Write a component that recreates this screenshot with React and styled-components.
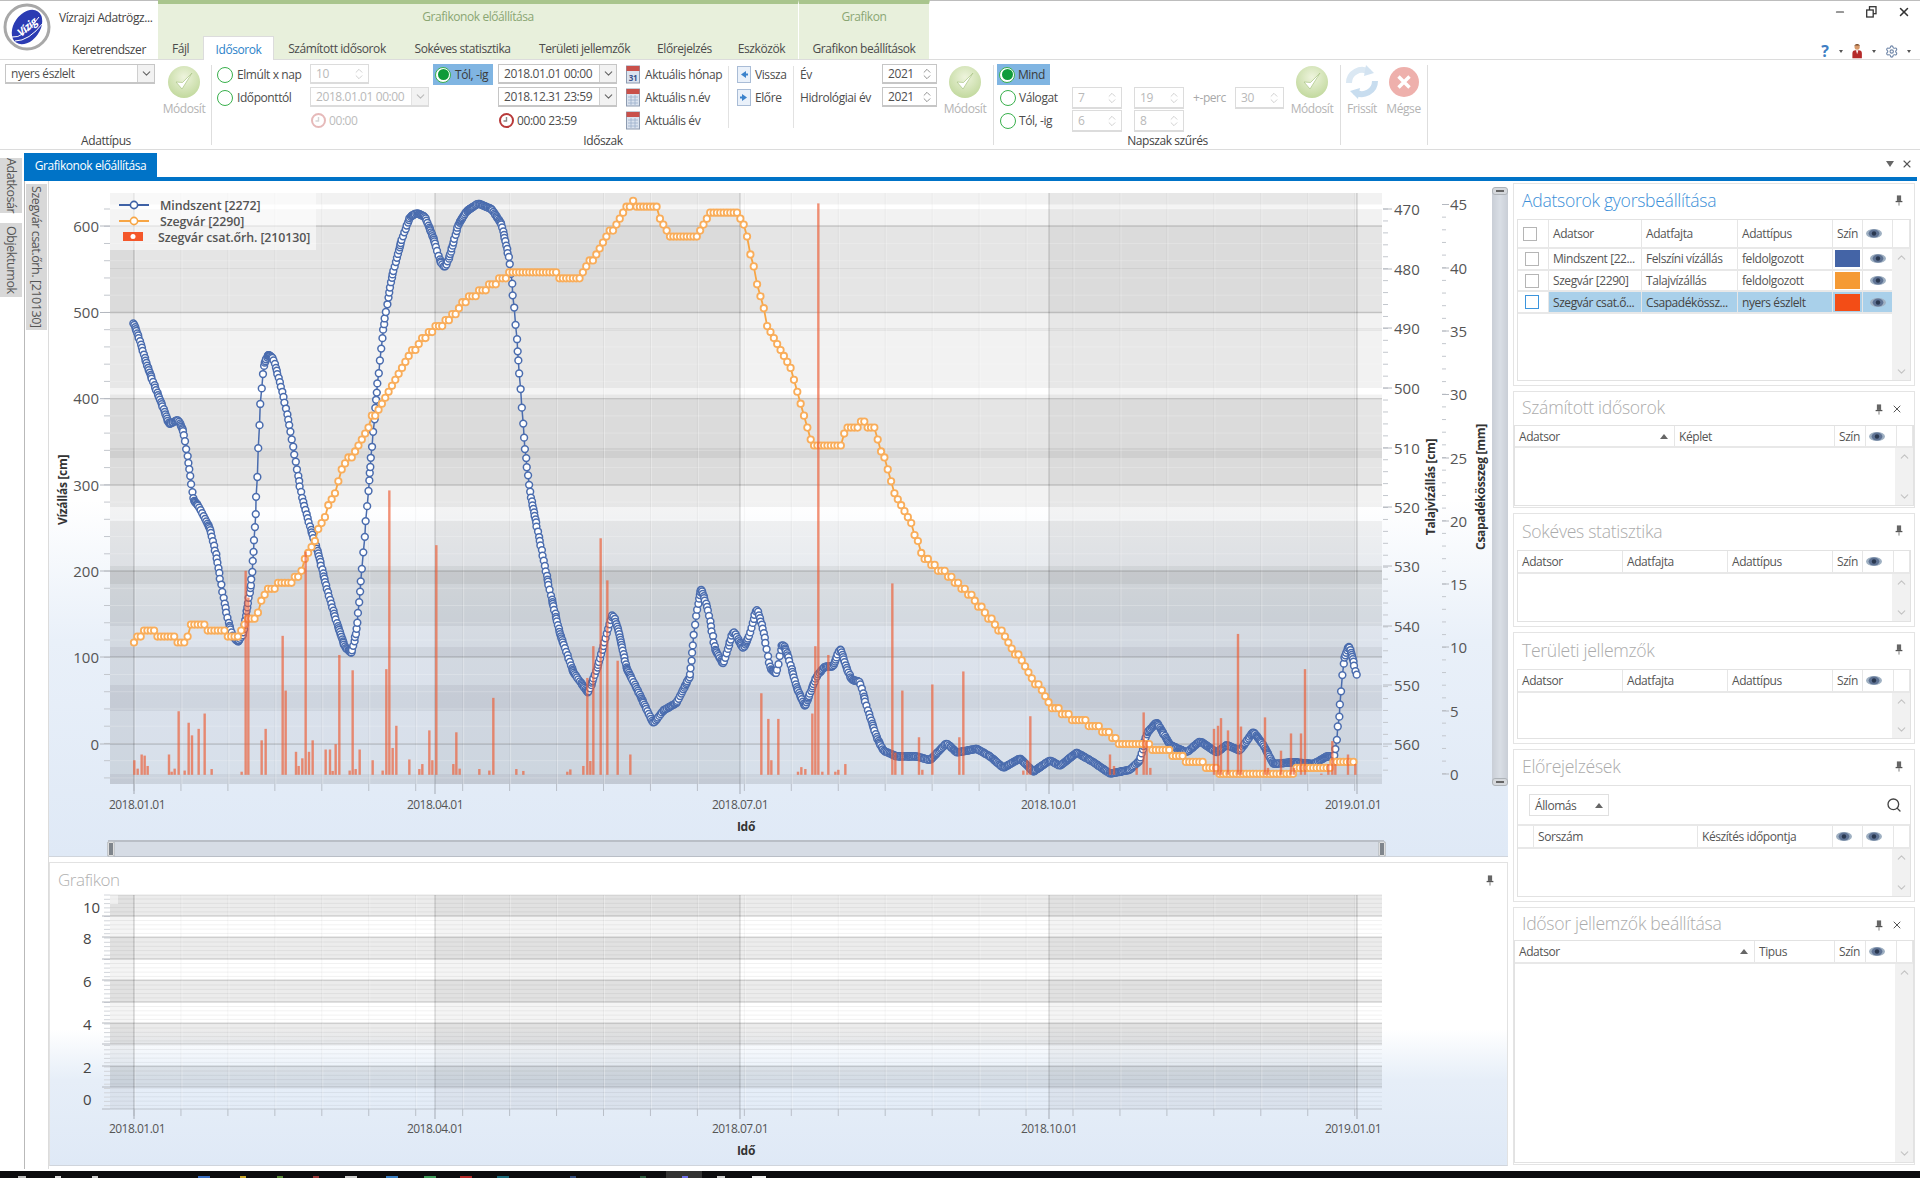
import React from "react";
import styled, { createGlobalStyle } from "styled-components";
import { ChevronUp, ChevronDown, ChevronsUpDown, Search, X, Minus, Settings } from "lucide-react";

const FONT = `"Open Sans", "Noto Sans", sans-serif`;

const Global = createGlobalStyle`
  html, body { margin: 0; padding: 0; width: 1920px; height: 1178px; overflow: hidden; background: #fff; }
  body { font-family: ${FONT}; font-size: 12px; letter-spacing: -0.42px; color: #555; }
  * { box-sizing: border-box; }
  svg text { font-family: ${FONT}; }
`;

const Page = styled.div`
  position: relative; width: 1920px; height: 1178px; display: flex; flex-direction: column; overflow: hidden; background: #fff;
`;

/* ---------- title bar ---------- */
const TitleBar = styled.header`
  height: 60px; flex: none; display: flex; position: relative; border-top: 1px solid #bdbdbd; border-bottom: 1px solid #dcdcdc;
`;
const AppMenu = styled.div`
  width: 158px; flex: none; position: relative;
`;
const LogoBox = styled.div`position: absolute; left: 3px; top: 2px; width: 48px; height: 48px;`;
const AppTitle = styled.div`position: absolute; left: 59px; top: 8px; white-space: nowrap; color: #444;`;
const AppTab = styled.div`position: absolute; left: 72px; top: 40px; white-space: nowrap; color: #444;`;
const ContextGroup = styled.div`
  width: ${p => p.$w}px; flex: none; display: flex; flex-direction: column; background: #e8f0dc;
  border-top: 4px solid #a9c58d; border-right: 1px solid #fff; margin-top: -1px;
`;
const ContextLabel = styled.div`height: 33px; padding-top: 4px; text-align: center; color: #8aa673;`;
const TabRow = styled.div`display: flex; height: 23px;`;
const RibbonTab = styled.div`
  width: ${p => p.$w}px; flex: none; display: flex; align-items: center; justify-content: center; white-space: nowrap; color: #4b4b4b; padding-top: 2px;
  ${p => p.$active ? `background:#fff; color:#2b82c9; border:1px solid #dcdcdc; border-bottom:0; height:24px;` : ""}
`;
const WindowButtons = styled.div`
  position: absolute; right: 9px; top: 4px; display: flex; gap: 20px; align-items: center; color: #333;
`;
const HelpRow = styled.div`
  position: absolute; left: 1820px; top: 39px; width: 100px; display: flex; align-items: center; color: #555;
`;
const Caret = styled.span`
  display: inline-block; margin: 0 9px 0 9px; border-left: 2.5px solid transparent; border-right: 2.5px solid transparent; border-top: 3px solid #555;
`;
const HelpMark = styled.span`color: #3f7fc4; font-weight: 700; font-size: 16px; width: 13px; text-align: center; letter-spacing: 0;`;

/* ---------- ribbon ---------- */
const Ribbon = styled.section`
  height: 90px; flex: none; display: flex; border-bottom: 1px solid #dcdcdc;
`;
const Group = styled.div`
  width: ${p => p.$w}px; flex: none; display: flex; flex-direction: column; position: relative;
  &::after { content: ""; position: absolute; right: 0; top: 5px; bottom: 4px; width: 1px; background: #dedede; }
`;
const GroupBody = styled.div`height: 72px; padding-top: 4px; display: flex;`;
const GroupLabel = styled.div`text-align: center; color: #444; height: 17px; line-height: 17px;`;
const Section = styled.div`
  width: ${p => p.$w}px; flex: none; position: relative; display: flex; padding-left: ${p => p.$pad || 0}px;
  ${p => p.$sep ? `&::after { content:""; position:absolute; right:0; top:2px; height:62px; width:1px; background:#e2e2e2; }` : ""}
`;
const Cells = styled.div`
  display: grid; grid-template-columns: ${p => p.$cols}; grid-auto-rows: 23px; align-items: start; justify-items: start;
`;
const Combo = styled.div`
  width: ${p => p.$w}px; height: ${p => p.$h || 20}px; display: flex; align-items: center; justify-content: space-between; background: #fff;
  border: 1px solid ${p => p.$off ? "#dcdcdc" : "#c6c6c6"}; border-bottom-width: 2px; padding-left: 5px; white-space: nowrap;
  color: ${p => p.$off ? "#b9b9b9" : "#4f4f4f"};
`;
const ComboButton = styled.span`
  width: 17px; align-self: stretch; flex: none; display: flex; align-items: center; justify-content: center;
  border-left: 1px solid ${p => p.$off ? "#e3e3e3" : "#cfcfcf"}; background: #f2f2f2; color: ${p => p.$off ? "#bbb" : "#666"};
`;
const SpinButton = styled.span`
  width: 14px; flex: none; display: flex; align-items: center; justify-content: center; margin-right: 2px; color: ${p => p.$off ? "#bdbdbd" : "#666"};
`;
const RadioItem = styled.div`
  display: flex; align-items: center; gap: ${p => p.$gap ?? 4}px; height: 21px; padding-left: ${p => p.$pad ?? 4}px; padding-right: 5px; white-space: nowrap; color: #4c4c4c;
  ${p => p.$on ? "background:#80b5e2; color:#3b3b3b;" : ""}
`;
const RadioDot = styled.span`
  width: 16px; height: 16px; flex: none; border-radius: 50%; border: 1.5px solid #39b04c; background: #fff; position: relative;
  ${p => p.$on ? `&::after { content:""; position:absolute; inset:1.5px; border-radius:50%; background:#0f9b3a; }` : ""}
`;
const ActionItem = styled.div`
  display: flex; align-items: center; gap: ${p => p.$gap ?? 4}px; height: 21px; white-space: nowrap; color: ${p => p.$off ? "#bcbcbc" : "#4c4c4c"}; padding-left: ${p => p.$pad ?? 0}px;
`;
const PlainLabel = styled.div`height: 21px; line-height: 21px; white-space: nowrap; color: ${p => p.$soft ? "#a8a8a8" : "#4c4c4c"};`;
const BigButton = styled.div`
  width: ${p => p.$w}px; flex: none; margin-left: ${p => p.$ml || 0}px; display: flex; flex-direction: column; align-items: center; color: #b4b4b4; white-space: nowrap;
`;
const BigIconBox = styled.div`height: 36px; display: flex; align-items: center; justify-content: center;`;

/* ---------- dock strip ---------- */
const DockStrip = styled.div`
  height: 31px; flex: none; margin-left: 24px; position: relative; padding-top: 3px;
`;
const DockTab = styled.div`
  width: 133px; height: 24px; background: #0073c7; color: #fff; display: flex; align-items: center; justify-content: center; white-space: nowrap;
`;
const DockLine = styled.div`height: 4px; background: #0073c7; margin-right: 3px;`;
const DockButtons = styled.div`position: absolute; right: 7px; top: 8px; display: flex; gap: 7px; align-items: center; color: #555;`;
const DownMark = styled.span`border-left: 4px solid transparent; border-right: 4px solid transparent; border-top: 6px solid #666;`;

/* ---------- workspace ---------- */
const Workspace = styled.main`flex: 1; display: flex; min-height: 0; position: relative;`;
const Rail = styled.div`width: 24px; flex: none; padding-top: 0; display: flex; flex-direction: column; align-items: flex-start;`;
const RailTab = styled.div`
  writing-mode: vertical-rl; background: #d8d8d8; color: #555; width: ${p => p.$w || 22}px; height: ${p => p.$h}px; margin-top: ${p => p.$mt || 0}px;
  display: flex; align-items: center; justify-content: center; white-space: nowrap; font-size: 12.5px; letter-spacing: -0.42px;
`;
const SecondRail = styled.div`
  width: 25px; flex: none; padding: 3px 0 0 1px; border-left: 1px solid #b9b9b9; border-right: 1px solid #dcdcdc; height: 988px;
`;
const ChartColumn = styled.div`width: 1459px; flex: none; padding-top: 3px; display: flex; flex-direction: column; gap: 5px; margin-left: 0;`;
const ChartPanel = styled.section`
  position: relative; height: 673px; border-bottom: 1px solid #d0d5dc;
  background: linear-gradient(#fff 0%, #fff 47%, #e9f0f9 68%, #dfe9f6 100%);
`;
const SecondPanel = styled.section`
  position: relative; height: 304px; border: 1px solid #e2e2e2; border-bottom: 1px solid #d0d5dc; margin-top: 0;
  background: linear-gradient(#fff 0%, #fff 55%, #e6eef8 72%, #dfe9f6 100%);
`;
const PlotSvg = styled.svg`position: absolute; left: 0; top: 0; display: block;`;
const PanelTitleSmall = styled.div`position: absolute; left: 8px; top: 5px; font-size: 17px; color: #b0b0b0; font-weight: 300;`;
const PinSpot = styled.div`position: absolute; right: 13px; top: 10px;`;
const HScroll = styled.div`
  position: absolute; left: 59px; top: 656px; width: 1276px; height: 17px; background: #d6dce5; border-top: 2px solid #b9bec6; border-bottom: 1px solid #b9bec6;
`;
const HHandle = styled.span`
  position: absolute; top: -1px; ${p => p.$right ? "right:-2px" : "left:-1px"}; width: 8px; height: 16px; border-radius: 2px; background: #7f858c; border: 1px solid #c2c7cc; box-shadow: inset 0 0 0 1px #dedede;
`;
const VScroll = styled.div`
  position: absolute; left: 1443px; top: 5px; width: 16px; height: 595px; background: linear-gradient(90deg,#c9ced6,#d9dee5,#c9ced6); border-radius: 2px;
`;
const VHandle = styled.span`
  position: absolute; left: 0; ${p => p.$bottom ? "bottom:-2px" : "top:-2px"}; width: 16px; height: 8px; border-radius: 3px; background: #d5d8dc; border: 1px solid #aeb3b8;
  &::after { content:""; position:absolute; left:3px; right:3px; top:2px; height:2px; background:#666; }
`;

/* ---------- right panels ---------- */
const SideColumn = styled.aside`
  width: 402px; flex: none; margin-left: 5px; padding-top: 2px; display: flex; flex-direction: column; gap: 5px;
`;
const SidePanel = styled.section`
  height: ${p => p.$h}px; flex: none; border: 1px solid #e4e4e4; background: #fff; padding: 0 ${p => p.$inset ?? 3}px; position: relative; display: flex; flex-direction: column;
`;
const SideTitle = styled.h3`
  margin: 0; height: ${p => p.$h}px; flex: none; padding: 0 0 3px ${p => 5 + (p.$lead || 0)}px; font-size: 17.6px; font-weight: 300; letter-spacing: -0.3px; display: flex; align-items: center;
  color: ${p => p.$active ? "#3b8fd8" : "#ababab"}; white-space: nowrap;
`;
const TitleIcons = styled.div`position: absolute; right: 11px; top: ${p => p.$top || 11}px; display: flex; gap: 8px; align-items: center; color: #555;`;
const Table = styled.div`
  flex: 1; display: flex; flex-direction: column; border: 1px solid #e2e2e2; margin-bottom: ${p => p.$mb ?? 4}px; min-height: 0;
`;
const Row = styled.div`
  display: grid; grid-template-columns: ${p => p.$cols}; height: ${p => p.$h}px; flex: none; border-bottom: 2px solid #e8e8e8;
`;
const Cell = styled.div`
  display: flex; align-items: center; padding-left: ${p => p.$pad ?? 4}px; border-right: 1px solid #e6e6e6; white-space: nowrap; overflow: hidden; color: #555; min-width: 0;
  ${p => p.$center ? "justify-content:center; padding-left:0;" : ""}
  ${p => p.$spread ? "justify-content:space-between; padding-right:6px;" : ""}
  ${p => p.$sel ? "background:#a9d0ea; color:#444;" : ""}
`;
const TableBody = styled.div`position: relative; flex: 1; min-height: 0;`;
const Track = styled.div`
  position: absolute; right: 0; top: 0; bottom: 0; width: 18px; background: #f1f1f1; display: flex; flex-direction: column; justify-content: space-between; align-items: center; color: #c3c3c3; padding: 2px 0;
`;
const Check = styled.span`
  width: 14px; height: 14px; display: block; background: #fff; border: 1px solid ${p => p.$on ? "#3c95dd" : "#b5b5b5"};
`;
const Swatch = styled.span`display: block; width: 25px; height: 17px; background: ${p => p.$c};`;
const SortMark = styled.span`border-left: 4px solid transparent; border-right: 4px solid transparent; border-bottom: 5px solid #666; flex: none;`;
const FilterRow = styled.div`height: 40px; flex: none; display: flex; align-items: center; justify-content: space-between; padding: 0 8px 0 11px; border-bottom: 2px solid #e8e8e8;`;
const FilterChip = styled.div`width: 80px; height: 22px; border: 1px solid #e0e0e0; display: flex; align-items: center; justify-content: space-between; padding: 0 5px;`;

/* ---------- taskbar ---------- */
const Taskbar = styled.footer`height: 7px; flex: none; background: #0c0c0e; position: relative; border-top: 0;`;
const TaskIcon = styled.span`
  position: absolute; bottom: 0; left: ${p => p.$x}px; width: ${p => p.$w || 12}px; height: ${p => p.$h || 2}px; background: ${p => p.$c};
`;
const TaskActive = styled.span`position: absolute; left: 666px; width: 36px; top: 0; bottom: 0; background: #333;`;

/* ---------- icons ---------- */
const Logo = () => (
  <svg width="48" height="48" viewBox="0 0 48 48">
    <circle cx="24" cy="24" r="22" fill="#fff" stroke="#a8a8a8" strokeWidth="3" />
    <ellipse cx="24" cy="24" rx="13" ry="19" transform="rotate(35 24 24)" fill="#2b3bb3" />
    <path d="M9 34 Q20 36 36 14 M12 38 Q26 38 40 20" stroke="#fff" strokeWidth="1" fill="none" />
    <text x="24" y="28" fontSize="11" fontStyle="italic" fontWeight="700" fill="#fff" textAnchor="middle" transform="rotate(-40 24 24)">Vízig</text>
  </svg>
);
const EyeIcon = () => (
  <svg width="16" height="11" viewBox="0 0 16 11" style={{ flex: "none" }}>
    <ellipse cx="8" cy="5.5" rx="8" ry="4.6" fill="#9fb0c2" />
    <ellipse cx="8" cy="5.5" rx="5.4" ry="4" fill="#5f7394" />
    <circle cx="8" cy="5.5" r="2.2" fill="#2a3850" />
  </svg>
);
const PinIcon = () => (
  <svg width="8" height="11" viewBox="0 0 9 13">
    <rect x="2" y="0.5" width="5" height="6.5" fill="#666" />
    <rect x="0.5" y="7" width="8" height="1.5" fill="#555" />
    <rect x="4" y="8.5" width="1" height="4" fill="#666" />
  </svg>
);
const CalendarIcon = ({ label }) => (
  <svg width="14" height="19" viewBox="0 0 14 19">
    <rect x="0.5" y="1" width="13" height="17" fill="#dbe3ef" stroke="#8d9bb0" />
    <rect x="0.5" y="1" width="13" height="5" fill="#c9504a" />
    {label ? <text x="7" y="16" fontSize="8" fontWeight="700" textAnchor="middle" fill="#39518a">{label}</text> :
      <path d="M2 9h10M2 12h10M2 15h10M5 7v10M9 7v10" stroke="#9db0cc" strokeWidth="0.8" />}
  </svg>
);
const NavIcon = ({ dir }) => (
  <svg width="14" height="17" viewBox="0 0 14 17">
    <rect x="0.5" y="0.5" width="13" height="16" fill="#eaf1fa" stroke="#a9bcd6" />
    <path d={dir === "l" ? "M9 5v7L4 8.5z" : "M5 5v7l5-3.5z"} fill="#3c83cc" />
    <rect x={dir === "l" ? 8.5 : 3} y="7.5" width="2.5" height="2" fill="#3c83cc" />
  </svg>
);
const ClockIcon = ({ off }) => (
  <svg width="15" height="15" viewBox="0 0 15 15" opacity={off ? 0.35 : 1}>
    <circle cx="7.5" cy="7.5" r="6.5" fill="#fff" stroke="#b83a3a" strokeWidth="2" />
    <path d="M7.5 4v4H4.5" stroke="#8a8a8a" strokeWidth="1.4" fill="none" />
  </svg>
);
const RoundOk = () => (
  <svg width="34" height="36" viewBox="0 0 34 36">
    <defs><radialGradient id="okg" cx="50%" cy="35%" r="65%"><stop offset="0" stopColor="#eef4dd" /><stop offset="1" stopColor="#c2d99e" /></radialGradient></defs>
    <circle cx="17" cy="18" r="16" fill="url(#okg)" />
    <path d="M9 18l6 7L25 9l-9.5 9.5z" fill="#fff" stroke="#a9c484" strokeWidth="0.7" />
  </svg>
);
const RoundCancel = () => (
  <svg width="34" height="36" viewBox="0 0 34 36">
    <circle cx="17" cy="18" r="15" fill="#eeb0ac" />
    <path d="M11.5 12.5l11 11M22.5 12.5l-11 11" stroke="#fff" strokeWidth="3.4" />
  </svg>
);
const RefreshIcon = () => (
  <svg width="36" height="36" viewBox="0 0 36 36" fill="none">
    <path d="M5 19a13 13 0 0 1 20-11" stroke="#dbe8f3" strokeWidth="6" />
    <path d="M31 17a13 13 0 0 1-20 11" stroke="#c8ddef" strokeWidth="6" />
    <path d="M22 1l8 8-10 3z" fill="#d3e3f1" />
    <path d="M14 35l-8-8 10-3z" fill="#c8ddef" />
  </svg>
);
const PersonIcon = () => (
  <svg width="13" height="19" viewBox="0 0 13 19">
    <circle cx="6.5" cy="4" r="3.2" fill="#d99a6b" />
    <path d="M3 3.5a3.5 3.5 0 0 1 7 0l-1-1.5H4z" fill="#7a4b2a" />
    <path d="M0.5 18v-6a4 4 0 0 1 4-4h4a4 4 0 0 1 4 4v6z" fill="#b52a2a" />
    <path d="M5 8h3l-1.5 5z" fill="#fff" />
  </svg>
);
const RestoreIcon = () => (
  <svg width="11" height="12" viewBox="0 0 11 12" fill="none" stroke="#333" strokeWidth="1.3">
    <rect x="3.5" y="0.7" width="6.5" height="7" /><rect x="0.7" y="4" width="6.5" height="7" fill="#fff" />
  </svg>
);

/* ---------- chart data (page pixels, from traced coordinates) ---------- */
const zp = (base, pts) => pts.map(([x, y]) => [base + x / 3, 190 + y / 2.613]);
const blueRaw = [
  ...zp(100, [[100,345],[120,395],[140,455],[165,515],[190,570],[207,612],[235,600],[250,630],[265,710],[280,810],[295,825],[330,885],[350,960],[365,1040],[385,1130],[400,1170],[415,1180],[430,1160],[440,1100],[455,1020],[465,880],[472,750],[478,600],[490,460],[505,430],[520,440],[545,520],[565,600],[585,700],[605,800],[630,880],[655,950],[680,1040],[710,1130],[735,1195],[755,1210],[770,1150],[785,1000],[800,840],[815,680],[830,530],[850,360],[875,230],[905,130],[930,70],[950,60],[975,70],[1000,125],[1020,185],[1035,205],[1050,170],[1075,90],[1100,55],[1135,35],[1175,50],[1205,90],[1230,190],[1245,330],[1260,500],[1275,680],[1290,790]]),
  ...zp(530, [[30,920],[60,1050],[90,1160],[130,1260],[175,1315],[205,1240],[230,1160],[248,1105],[265,1150],[290,1250],[330,1320],[370,1395],[400,1360],[440,1340],[480,1270],[495,1130],[513,1040],[535,1100],[555,1200],[580,1240],[610,1150],[640,1200],[660,1160],[680,1090],[700,1150],[720,1250],[740,1265],[757,1180],[775,1220],[800,1300],[825,1350],[860,1270],[885,1245],[910,1245],[930,1195],[950,1250],[965,1280],[990,1285],[1010,1350],[1040,1430],[1060,1465],[1100,1480],[1160,1480],[1200,1490],[1250,1445],[1280,1470]]),
  ...zp(960, [[50,1460],[90,1480],[130,1510],[180,1485],[220,1520],[270,1490],[300,1505],[350,1470],[400,1495],[450,1525],[510,1515],[540,1490],[560,1420],[590,1390],[630,1450],[680,1470],[720,1440],[770,1470],[800,1450],[840,1465],[880,1415],[910,1450],[940,1500],[1000,1495],[1060,1500],[1100,1480],[1125,1480],[1140,1350],[1150,1230],[1167,1190],[1180,1230],[1192,1283]]),
];
const orangeRaw = [
  ...zp(100, [[100,1183],[125,1165],[140,1150],[160,1150],[170,1167],[225,1167],[235,1183],[260,1183],[270,1135],[315,1135],[325,1152],[375,1152],[385,1167],[420,1167],[440,1120],[470,1120],[490,1060],[530,1030],[570,1030],[600,1000],[630,940],[660,880],[700,800],[725,735],[770,670],[820,590],[850,560],[880,500],[940,420],[1000,360],[1040,345],[1100,285],[1140,268],[1190,238],[1250,208],[1260,222],[1350,222]]),
  ...zp(530, [[80,222],[90,238],[145,238],[190,175],[240,110],[290,50],[310,35],[340,50],[380,50],[415,115],[500,115],[550,52],[610,52],[635,70],[660,160],[690,280],[715,360],[780,460],[840,640],[845,672],[930,672],[950,625],[1000,610],[1035,625],[1090,780],[1140,870],[1180,960],[1210,985],[1240,1000],[1290,1030]]),
  ...zp(960, [[60,1090],[120,1150],[200,1250],[270,1345],[310,1370],[360,1385],[400,1400],[440,1415],[480,1445],[520,1445],[610,1463],[660,1480],[700,1495],[770,1510],[780,1525],[1000,1525],[1010,1510],[1100,1510],[1120,1495],[1185,1495]]),
];
const lerp = (pts, x) => {
  for (let i = 1; i < pts.length; i++) {
    if (x <= pts[i][0]) {
      const [a, b] = [pts[i - 1], pts[i]];
      const t = b[0] === a[0] ? 1 : (x - a[0]) / (b[0] - a[0]);
      return a[1] + (b[1] - a[1]) * t;
    }
  }
  return pts[pts.length - 1][1];
};
/* uneven sampling, as the measured series has: a repeatable pseudo-random step */
const bluePts = (() => {
  const out = [];
  const end = blueRaw[blueRaw.length - 1][0];
  let seed = 7;
  for (let x = blueRaw[0][0]; x <= end;) {
    out.push([x, lerp(blueRaw, x)]);
    seed = (seed * 9301 + 49297) % 233280;
    x += 0.3 + (seed / 233280) * 1.3;
  }
  return out.map((p, i) => {
    let s = 0, n = 0;
    for (let k = Math.max(0, i - 1); k <= Math.min(out.length - 1, i + 1); k++) { s += out[k][1]; n++; }
    return [p[0], s / n];
  });
})();
const orangePts = (() => {
  const out = [];
  for (let x = 134; x <= 1355; x += 3.35) {
    const y = lerp(orangeRaw, x);
    out.push([x, 744 - Math.round((744 - y) / 5.97) * 5.97]);
  }
  return out;
})();
const BAR_BASE = 774.8;
const bars = [
  ...zp(100, [[103,1490],[113,1512],[125,1475],[134,1478],[143,1505],[207,1475],[215,1520],[224,1512],[236,1362],[254,1517],[266,1392],[276,1425],[296,1408],[314,1368],[335,1513],[425,1520],[437,995],[445,1065],[485,1438],[497,1408],[548,1165],[557,1308],[588,1468],[596,1505],[607,1485],[617,945],[627,1468],[638,1438],[677,1462],[690,1462],[698,1518],[707,1448],[718,1215],[749,1517],[758,1255],[767,1513],[779,1462],[818,1490],[848,1517],[859,1252],[868,785],[878,1458],[889,1400],[928,1488],[958,1513],[967,1500],[988,1412],[997,1490],[1009,928],[1060,1500],[1069,1417],[1079,1512],[1138,1513],[1168,1517],[1180,1327],[1249,1513],[1270,1518]]),
  ...zp(530, [[112,1520],[121,1514],[160,1505],[172,1275],[181,1492],[190,1192],[212,910],[232,1020],[263,1230],[301,1475],[694,1315],[715,1382],[724,1490],[745,1382],[804,1520],[814,1508],[826,1513],[847,1368],[856,1192],[865,35],[877,1520],[895,1215],[916,1520],[925,1515],[946,1500],[1087,1028],[1096,1470],[1117,1308],[1167,1430],[1177,1515],[1207,1292],[1288,1430],[1300,1258]]),
  ...zp(960, [[190,1517],[202,1490],[211,1375],[450,1475],[462,1505],[530,1510],[551,1365],[560,1440],[571,1510],[762,1408],[774,1400],[783,1380],[804,1412],[834,1160],[843,1402],[915,1378],[924,1510],[963,1465],[993,1420],[1002,1510],[1023,1420],[1035,1252],[1084,1525],[1105,1500],[1117,1440],[1126,1500],[1164,1475],[1186,1500]]),
];

const PLOT = { x0: 110, x1: 1382 };
const MAJOR_X = [134, 435, 740, 1049, 1357];
const MINOR_X = Array.from({ length: 27 }, (_, i) => 134 + i * 46.95);
const DATES = [["2018.01.01", 137], ["2018.04.01", 435], ["2018.07.01", 740], ["2018.10.01", 1049], ["2019.01.01", 1353]];
const DARK_X = [[110, 134], [435, 740], [1049, 1357]];

const Bands = ({ y0, y1, list, o = 0.05 }) => list.map(([a, b], i) => {
  const t = Math.max(a, y0), e = Math.min(b, y1);
  return e > t ? <rect key={i} x={PLOT.x0} y={t} width={PLOT.x1 - PLOT.x0} height={e - t} fill="#000" opacity={o} /> : null;
});
const VBands = ({ y0, y1 }) => DARK_X.map(([a, b], i) => <rect key={i} x={a} y={y0} width={b - a} height={y1 - y0} fill="#000" opacity="0.045" />);
const VLines = ({ y0, y1 }) => (
  <>
    {MINOR_X.map((x, i) => (
      <g key={i}>
        <line x1={x} x2={x} y1={y0} y2={y1} stroke="#000" strokeOpacity="0.04" />
        <line x1={x + 1} x2={x + 1} y1={y0} y2={y1} stroke="#fff" strokeOpacity="0.3" />
      </g>
    ))}
    {MAJOR_X.map((x, i) => <line key={i} x1={x} x2={x} y1={y0} y2={y1} stroke="#000" strokeOpacity="0.17" strokeWidth="1.2" />)}
  </>
);
const XAxis = ({ y1, labelY, titleY }) => (
  <>
    {MINOR_X.map((x, i) => <line key={i} x1={x} x2={x} y1={y1} y2={y1 + 7} stroke="#b9bfc8" />)}
    {MAJOR_X.map((x, i) => <line key={i} x1={x} x2={x} y1={y1} y2={y1 + 10} stroke="#a5abb5" />)}
    {DATES.map(([t, x]) => <text key={t} x={x} y={labelY} fontSize="12" letterSpacing="-0.5" fill="#555" textAnchor="middle">{t}</text>)}
    <text x="746" y={titleY} fontSize="12" fontWeight="700" letterSpacing="-0.3" fill="#333" textAnchor="middle">Idő</text>
  </>
);
const Ticks = ({ from, to, step, x1, x2, c = "#c3c7cd" }) => {
  const out = [];
  for (let y = from; y <= to; y += step) out.push(<line key={y} x1={x1} x2={x2} y1={y} y2={y} stroke={c} />);
  return out;
};

const MainChart = () => {
  const y0 = 193, y1 = 784;
  const a1 = [[226, 313], [399, 485], [571, 657], [744, 784]];
  const a2 = [[209, 269], [328, 388], [448, 507], [566, 626], [685, 744]];
  const a3 = [[193, 204.5], [268, 331], [394.5, 458], [521, 584], [647, 711], [774, 784]];
  const leftVals = [[600, 226], [500, 312.5], [400, 398.7], [300, 485], [200, 571], [100, 657], [0, 744]];
  const midVals = [[470, 209], [480, 269], [490, 328], [500, 388], [510, 448], [520, 507], [530, 566], [540, 626], [550, 685], [560, 744]];
  const rightVals = [[45, 204.5], [40, 268], [35, 331], [30, 394.5], [25, 458], [20, 521], [15, 584], [10, 647], [5, 711], [0, 774]];
  const minor = [];
  for (let y = 209; y < y1; y += 17.24) minor.push(y);
  const orangeLine = orangePts.map(p => p.join(",")).join(" ");
  const blueLine = bluePts.map(p => p.join(",")).join(" ");
  return (
    <PlotSvg width="1459" height="673" viewBox="49 184 1459 673">
      <Bands y0={y0} y1={y1} list={a1} />
      <Bands y0={y0} y1={y1} list={a2} />
      <Bands y0={y0} y1={y1} list={a3} />
      <VBands y0={y0} y1={y1} />
      {minor.map((y, i) => <line key={i} x1={PLOT.x0} x2={PLOT.x1} y1={y} y2={y} stroke="#fff" strokeOpacity="0.22" />)}
      <VLines y0={y0} y1={y1} />
      {leftVals.map(([, y]) => <line key={y} x1={PLOT.x0} x2={PLOT.x1} y1={y} y2={y} stroke="#000" strokeOpacity="0.17" strokeWidth="1.3" />)}

      <Ticks from={209} to={784} step={17.24} x1={104} x2={110} />
      {leftVals.map(([v, y]) => (
        <g key={v}>
          <line x1="100" x2="110" y1={y} y2={y} stroke="#b4b8bf" />
          <text x="99" y={y + 5.5} fontSize="15" letterSpacing="0" fill="#555" textAnchor="end">{v}</text>
        </g>
      ))}
      <Ticks from={209} to={780} step={11.94} x1={1383} x2={1388} />
      {midVals.map(([v, y]) => (
        <g key={v}>
          <line x1="1383" x2="1392" y1={y} y2={y} stroke="#b4b8bf" />
          <text x="1394" y={y + 5.5} fontSize="15" letterSpacing="0" fill="#555">{v}</text>
        </g>
      ))}
      <Ticks from={204.5} to={774} step={12.65} x1={1442} x2={1446} />
      {rightVals.map(([v, y]) => (
        <g key={v}>
          <line x1="1442" x2="1449" y1={y} y2={y} stroke="#b4b8bf" />
          <text x="1450" y={y + 5.5} fontSize="15" letterSpacing="0" fill="#555">{v}</text>
        </g>
      ))}
      <text transform="translate(67 490) rotate(-90)" fontSize="12" fontWeight="700" letterSpacing="-0.3" fill="#333" textAnchor="middle">Vízállás [cm]</text>
      <text transform="translate(1435 487) rotate(-90)" fontSize="12" fontWeight="700" letterSpacing="-0.3" fill="#333" textAnchor="middle">Talajvízállás [cm]</text>
      <text transform="translate(1485 487) rotate(-90)" fontSize="12" fontWeight="700" letterSpacing="-0.3" fill="#333" textAnchor="middle">Csapadékösszeg [mm]</text>

      <XAxis y1={y1} labelY={809} titleY={831} />

      <polyline points={blueLine} fill="none" stroke="#4a6cae" strokeWidth="1.5" />
      {bluePts.map((p, i) => <circle key={i} cx={p[0]} cy={p[1]} r="3.4" fill="#fff" stroke="#4a6cae" strokeWidth="1.5" />)}
      <polyline points={orangeLine} fill="none" stroke="#f7a544" strokeWidth="1.8" />
      {orangePts.map((p, i) => <circle key={i} cx={p[0]} cy={p[1]} r="3.2" fill="#fff" stroke="#f9ad5a" strokeWidth="1.8" />)}
      {bars.map(([x, y], i) => <rect key={i} x={x - 1.2} y={y} width="2.4" height={BAR_BASE - y} fill="#ec5f36" opacity="0.68" />)}

      <rect x="110" y="193" width="206" height="57" fill="#fff" opacity="0.55" />
      <line x1="119" x2="149" y1="205" y2="205" stroke="#3f62a6" strokeWidth="2" />
      <circle cx="134" cy="205" r="3.6" fill="#fff" stroke="#3f62a6" strokeWidth="1.6" />
      <text x="160" y="210" fontSize="12.4" fontWeight="600" letterSpacing="-0.1" fill="#555">Mindszent [2272]</text>
      <line x1="119" x2="149" y1="221" y2="221" stroke="#f7a544" strokeWidth="2" />
      <circle cx="134" cy="221" r="3.6" fill="#fff" stroke="#f7a544" strokeWidth="1.6" />
      <text x="160" y="226" fontSize="12.4" fontWeight="600" letterSpacing="-0.1" fill="#555">Szegvár [2290]</text>
      <rect x="123" y="232" width="20" height="9" fill="#f4572a" />
      <circle cx="133" cy="236.5" r="2.5" fill="#fff" />
      <text x="158" y="242" fontSize="12.4" fontWeight="600" letterSpacing="-0.1" fill="#555">Szegvár csat.őrh. [210130]</text>
    </PlotSvg>
  );
};

const SmallChart = () => {
  const y0 = 895, y1 = 1109;
  const dark = [[895, 916], [937, 959], [980, 1002], [1023, 1044], [1066, 1087]];
  const majors = [916, 937, 959, 980, 1002, 1023, 1044, 1066, 1087, 1109];
  const minor = [];
  for (let y = 899; y < y1; y += 4.3) minor.push(y);
  const labels = [["10", 913], ["8", 944], ["6", 987], ["4", 1030], ["2", 1073], ["0", 1105]];
  return (
    <PlotSvg width="1457" height="302" viewBox="50 863 1457 302">
      <Bands y0={y0} y1={y1} list={dark} o={0.075} />
      <VBands y0={y0} y1={y1} />
      {minor.map((y, i) => <line key={i} x1={PLOT.x0} x2={PLOT.x1} y1={y} y2={y} stroke="#000" strokeOpacity="0.055" />)}
      <rect x="110" y="895" width="8" height="9" fill="#fff" opacity="0.5" />
      <VLines y0={y0} y1={y1} />
      {majors.map(y => <line key={y} x1={PLOT.x0} x2={PLOT.x1} y1={y} y2={y} stroke="#000" strokeOpacity="0.17" strokeWidth="1.2" />)}
      <line x1={PLOT.x0} x2={PLOT.x1} y1={y0} y2={y0} stroke="#000" strokeOpacity="0.1" />
      <Ticks from={895} to={1109} step={4.3} x1={104} x2={110} c="#d2d5da" />
      {majors.map(y => <line key={y} x1="102" x2="110" y1={y} y2={y} stroke="#b4b8bf" />)}
      {labels.map(([t, y]) => <text key={t} x="83" y={y} fontSize="15" letterSpacing="0" fill="#444">{t}</text>)}
      <XAxis y1={y1} labelY={1133} titleY={1155} />
    </PlotSvg>
  );
};

/* ---------- tables ---------- */
const TRACK = (
  <Track>
    <ChevronUp size={13} />
    <ChevronDown size={13} />
  </Track>
);
const STD_COLS = "105px 105px 105px 30px 31px 1fr";
const StdHeader = () => (
  <Row $cols={STD_COLS} $h={23}>
    <Cell>Adatsor</Cell><Cell>Adatfajta</Cell><Cell>Adattípus</Cell><Cell>Szín</Cell><Cell $pad={3}><EyeIcon /></Cell><Cell />
  </Row>
);
const QUICK_COLS = "31px 93px 96px 95px 30px 30px 1fr";
const QUICK_ROWS = [
  ["Mindszent [22...", "Felszíni vízállás", "feldolgozott", "#4464a6"],
  ["Szegvár [2290]", "Talajvízállás", "feldolgozott", "#f59a34"],
  ["Szegvár csat.ő...", "Csapadékössz...", "nyers észlelt", "#f34d16", true],
];

const Spin = ({ w, value, off = true, h }) => (
  <Combo $w={w} $h={h} $off={off}>
    {value}
    <SpinButton $off={off}><ChevronsUpDown size={14} strokeWidth={1.2} /></SpinButton>
  </Combo>
);
const DateBox = ({ w, value, off }) => (
  <Combo $w={w} $off={off}>
    {value}
    <ComboButton $off={off}><ChevronDown size={13} /></ComboButton>
  </Combo>
);

export default function App() {
  return (
    <Page>
      <Global />
      <TitleBar>
        <AppMenu>
          <LogoBox><Logo /></LogoBox>
          <AppTitle>Vízrajzi Adatrögz...</AppTitle>
          <AppTab>Keretrendszer</AppTab>
        </AppMenu>
        <ContextGroup $w={641}>
          <ContextLabel>Grafikonok előállítása</ContextLabel>
          <TabRow>
            <RibbonTab $w={45}>Fájl</RibbonTab>
            <RibbonTab $w={71} $active>Idősorok</RibbonTab>
            <RibbonTab $w={126}>Számított idősorok</RibbonTab>
            <RibbonTab $w={125}>Sokéves statisztika</RibbonTab>
            <RibbonTab $w={119}>Területi jellemzők</RibbonTab>
            <RibbonTab $w={81}>Előrejelzés</RibbonTab>
            <RibbonTab $w={73}>Eszközök</RibbonTab>
          </TabRow>
        </ContextGroup>
        <ContextGroup $w={131}>
          <ContextLabel>Grafikon</ContextLabel>
          <TabRow><RibbonTab $w={130}>Grafikon beállítások</RibbonTab></TabRow>
        </ContextGroup>
        <WindowButtons>
          <Minus size={12} strokeWidth={2.4} />
          <RestoreIcon />
          <X size={14} strokeWidth={2.6} />
        </WindowButtons>
        <HelpRow>
          <HelpMark>?</HelpMark><Caret />
          <PersonIcon /><Caret />
          <Settings size={17} color="#6f86a8" /><Caret />
        </HelpRow>
      </TitleBar>

      <Ribbon>
        <Group $w={212}>
          <GroupBody>
            <Section $w={162} $pad={5}>
              <DateBox w={150} value="nyers észlelt" />
            </Section>
            <BigButton $w={44}><BigIconBox><RoundOk /></BigIconBox>Módosít</BigButton>
          </GroupBody>
          <GroupLabel>Adattípus</GroupLabel>
        </Group>

        <Group $w={782}>
          <GroupBody>
            <Section $w={517} $sep $pad={1}>
              <Cells $cols="97px 123px 65px 128px 103px">
                <RadioItem><RadioDot />Elmúlt x nap</RadioItem>
                <Spin w={59} value="10" />
                <RadioItem $on $pad={2}><RadioDot $on />Tól, -ig</RadioItem>
                <DateBox w={119} value="2018.01.01 00:00" />
                <ActionItem $gap={5}><CalendarIcon label="31" />Aktuális hónap</ActionItem>

                <RadioItem><RadioDot />Időponttól</RadioItem>
                <DateBox w={119} value="2018.01.01 00:00" off />
                <span />
                <DateBox w={119} value="2018.12.31 23:59" />
                <ActionItem $gap={5}><CalendarIcon />Aktuális n.év</ActionItem>

                <span />
                <ActionItem $off $pad={1} $gap={3}><ClockIcon off />00:00</ActionItem>
                <span />
                <ActionItem $gap={3} $pad={1}><ClockIcon />00:00 23:59</ActionItem>
                <ActionItem $gap={5}><CalendarIcon />Aktuális év</ActionItem>
              </Cells>
            </Section>
            <Section $w={65} $sep $pad={8}>
              <Cells $cols="57px">
                <ActionItem $gap={4}><NavIcon dir="l" />Vissza</ActionItem>
                <ActionItem $gap={4}><NavIcon dir="r" />Előre</ActionItem>
              </Cells>
            </Section>
            <Section $w={200} $pad={6}>
              <Cells $cols="82px 61px">
                <PlainLabel>Év</PlainLabel>
                <Spin w={55} value="2021" off={false} />
                <PlainLabel>Hidrológiai év</PlainLabel>
                <Spin w={55} value="2021" off={false} />
              </Cells>
              <BigButton $w={44}><BigIconBox><RoundOk /></BigIconBox>Módosít</BigButton>
            </Section>
          </GroupBody>
          <GroupLabel>Időszak</GroupLabel>
        </Group>

        <Group $w={347}>
          <GroupBody>
            <Section $w={296} $pad={3}>
              <Cells $cols="75px 62px 59px 42px 56px">
                <RadioItem $on $pad={2} $gap={3}><RadioDot $on />Mind</RadioItem>
                <span /><span /><span /><span />
                <RadioItem $pad={3} $gap={3}><RadioDot />Válogat</RadioItem>
                <Spin w={50} h={22} value="7" />
                <Spin w={50} h={22} value="19" />
                <PlainLabel $soft>+-perc</PlainLabel>
                <Spin w={49} h={22} value="30" />
                <RadioItem $pad={3} $gap={3}><RadioDot />Tól, -ig</RadioItem>
                <Spin w={50} h={22} value="6" />
                <Spin w={50} h={22} value="8" />
              </Cells>
            </Section>
            <BigButton $w={44}><BigIconBox><RoundOk /></BigIconBox>Módosít</BigButton>
          </GroupBody>
          <GroupLabel>Napszak szűrés</GroupLabel>
        </Group>

        <Group $w={87}>
          <GroupBody>
            <BigButton $w={42}><BigIconBox><RefreshIcon /></BigIconBox>Frissít</BigButton>
            <BigButton $w={41}><BigIconBox><RoundCancel /></BigIconBox>Mégse</BigButton>
          </GroupBody>
          <GroupLabel />
        </Group>
      </Ribbon>

      <DockStrip>
        <DockTab>Grafikonok előállítása</DockTab>
        <DockLine />
        <DockButtons><DownMark /><X size={12} strokeWidth={2.2} /></DockButtons>
      </DockStrip>

      <Workspace>
        <Rail>
          <RailTab $h={55} $mt={-23}>Adatkosár</RailTab>
          <RailTab $h={74} $mt={10}>Objektumok</RailTab>
        </Rail>
        <SecondRail>
          <RailTab $h={146} $w={21}>Szegvár csat.őrh. [210130]</RailTab>
        </SecondRail>
        <ChartColumn>
          <ChartPanel>
            <MainChart />
            <HScroll><HHandle /><HHandle $right /></HScroll>
            <VScroll><VHandle /><VHandle $bottom /></VScroll>
          </ChartPanel>
          <SecondPanel>
            <SmallChart />
            <PanelTitleSmall>Grafikon</PanelTitleSmall>
            <PinSpot><PinIcon /></PinSpot>
          </SecondPanel>
        </ChartColumn>

        <SideColumn>
          <SidePanel $h={203}>
            <SideTitle $h={35} $active>Adatsorok gyorsbeállítása</SideTitle>
            <TitleIcons><PinIcon /></TitleIcons>
            <Table>
              <Row $cols={QUICK_COLS} $h={29}>
                <Cell $pad={5}><Check /></Cell><Cell>Adatsor</Cell><Cell>Adatfajta</Cell><Cell>Adattípus</Cell><Cell>Szín</Cell><Cell $pad={3}><EyeIcon /></Cell><Cell />
              </Row>
              <TableBody>
                {QUICK_ROWS.map(([a, b, c, color, sel]) => (
                  <Row key={a} $cols="31px 93px 96px 95px 30px 30px" $h={21.7}>
                    <Cell $pad={7}><Check $on={sel} /></Cell>
                    <Cell $sel={sel}>{a}</Cell>
                    <Cell $sel={sel}>{b}</Cell>
                    <Cell $sel={sel}>{c}</Cell>
                    <Cell $sel={sel} $pad={2}><Swatch $c={color} /></Cell>
                    <Cell $sel={sel} $center><EyeIcon /></Cell>
                  </Row>
                ))}
                {TRACK}
              </TableBody>
            </Table>
          </SidePanel>

          <SidePanel $h={117} $inset={0}>
            <SideTitle $h={33} $lead={3}>Számított idősorok</SideTitle>
            <TitleIcons><PinIcon /><X size={12} /></TitleIcons>
            <Table $mb={1}>
              <Row $cols="160px 160px 31px 31px 1fr" $h={22}>
                <Cell $spread>Adatsor<SortMark /></Cell><Cell>Képlet</Cell><Cell>Szín</Cell><Cell $pad={3}><EyeIcon /></Cell><Cell />
              </Row>
              <TableBody>{TRACK}</TableBody>
            </Table>
          </SidePanel>

          <SidePanel $h={114}>
            <SideTitle $h={36}>Sokéves statisztika</SideTitle>
            <TitleIcons><PinIcon /></TitleIcons>
            <Table>
              <StdHeader />
              <TableBody>{TRACK}</TableBody>
            </Table>
          </SidePanel>

          <SidePanel $h={112}>
            <SideTitle $h={36}>Területi jellemzők</SideTitle>
            <TitleIcons><PinIcon /></TitleIcons>
            <Table>
              <StdHeader />
              <TableBody>{TRACK}</TableBody>
            </Table>
          </SidePanel>

          <SidePanel $h={153}>
            <SideTitle $h={35}>Előrejelzések</SideTitle>
            <TitleIcons><PinIcon /></TitleIcons>
            <Table>
              <FilterRow>
                <FilterChip>Állomás<SortMark /></FilterChip>
                <Search size={16} color="#444" />
              </FilterRow>
              <Row $cols="16px 164px 135px 30px 31px 1fr" $h={23}>
                <Cell /><Cell>Sorszám</Cell><Cell>Készítés időpontja</Cell><Cell $pad={3}><EyeIcon /></Cell><Cell $pad={3}><EyeIcon /></Cell><Cell />
              </Row>
              <TableBody>{TRACK}</TableBody>
            </Table>
          </SidePanel>

          <SidePanel $h={258} $inset={0}>
            <SideTitle $h={32} $lead={3}>Idősor jellemzők beállítása</SideTitle>
            <TitleIcons><PinIcon /><X size={12} /></TitleIcons>
            <Table $mb={1}>
              <Row $cols="240px 80px 31px 31px 1fr" $h={23}>
                <Cell $spread>Adatsor<SortMark /></Cell><Cell>Tipus</Cell><Cell>Szín</Cell><Cell $pad={3}><EyeIcon /></Cell><Cell />
              </Row>
              <TableBody>{TRACK}</TableBody>
            </Table>
          </SidePanel>
        </SideColumn>
      </Workspace>

      <Taskbar>
        <TaskActive />
        {[[18, "#bbb", 8], [55, "#ddd", 6], [92, "#ccc", 6], [198, "#3a6fc4"], [240, "#c7a52a", 6], [277, "#5a8a3a", 6], [313, "#9a3a3a", 6], [345, "#cfcfcf"], [386, "#3a7fc4"], [424, "#3f9a5a"], [460, "#b52a2a"], [497, "#1a6a7a"], [570, "#334a7a", 6], [640, "#2f5a3f", 6], [682, "#6f6fe8", 6], [717, "#ccc", 8], [752, "#eee", 14]].map(([x, c, w]) => (
          <TaskIcon key={x} $x={x} $c={c} $w={w} />
        ))}
      </Taskbar>
    </Page>
  );
}
